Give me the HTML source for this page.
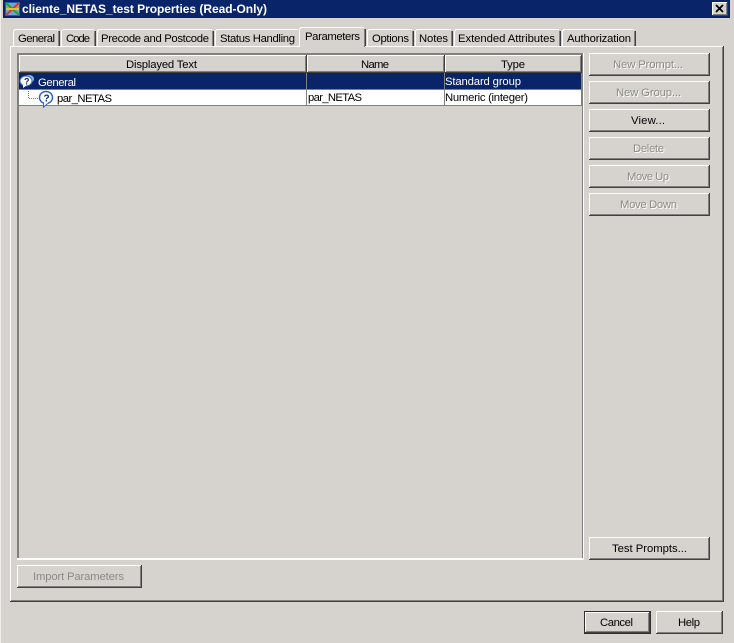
<!DOCTYPE html>
<html>
<head>
<meta charset="utf-8">
<style>
html,body{margin:0;padding:0;width:734px;height:643px;overflow:hidden;background:#d6d3ce}
svg{display:block;position:absolute;left:0;top:0}
text{font-family:"Liberation Sans",sans-serif;font-size:11.3px;fill:#000}
.dis{fill:#8c8a85}
.sh{fill:#fff}
.w{fill:#fff}
</style>
</head>
<body>
<svg width="734" height="643" viewBox="0 0 734 643" xmlns="http://www.w3.org/2000/svg">
<rect width="734" height="643" fill="#d6d3ce"/>
<rect x="0" y="0" width="1" height="643" fill="#efeeeb"/>
<!-- Title bar -->
<rect x="3" y="0" width="727" height="18" fill="#0a246a"/>
<g shape-rendering="crispEdges">
<rect x="5" y="2" width="15" height="14" fill="#1f5fb0"/>
<rect x="6" y="3" width="13" height="12" fill="#6fa3d8"/>
</g>
<path d="M6 3 L19 15" stroke="#2ca02c" stroke-width="2"/>
<path d="M19 3 L6 15" stroke="#d83a2a" stroke-width="2"/>
<path d="M6 9 H19" stroke="#e8c020" stroke-width="2"/>
<text x="22" y="13" class="w" style="font-weight:bold;font-size:12px" textLength="245" lengthAdjust="spacing">cliente_NETAS_test Properties (Read-Only)</text>
<!-- close -->
<g shape-rendering="crispEdges">
<rect x="712" y="2" width="16" height="14" fill="#404040"/>
<rect x="712" y="2" width="15" height="13" fill="#fff"/>
<rect x="713" y="3" width="14" height="12" fill="#808080"/>
<rect x="713" y="3" width="13" height="11" fill="#d6d3ce"/>
</g>
<path d="M716 5 L723 12 M723 5 L716 12" stroke="#000" stroke-width="1.8"/>

<!-- Tab panel -->
<g shape-rendering="crispEdges">
<rect x="10" y="46" width="714" height="556" fill="#404040"/>
<rect x="10" y="46" width="713" height="555" fill="#fff"/>
<rect x="11" y="47" width="712" height="554" fill="#808080"/>
<rect x="11" y="47" width="711" height="553" fill="#d6d3ce"/>
</g>

<!-- Tabs -->
<g shape-rendering="crispEdges" fill="none">
<path d="M13.5 46 V31 L15 29.5 H58" stroke="#fff"/><path d="M59.5 31 V46" stroke="#404040"/><path d="M58.5 31 V46" stroke="#808080"/>
<path d="M61.5 46 V31 L63 29.5 H94" stroke="#fff"/><path d="M95.5 31 V46" stroke="#404040"/><path d="M94.5 31 V46" stroke="#808080"/>
<path d="M97.5 46 V31 L99 29.5 H212" stroke="#fff"/><path d="M213.5 31 V46" stroke="#404040"/><path d="M212.5 31 V46" stroke="#808080"/>
<path d="M215.5 46 V31 L217 29.5 H298" stroke="#fff"/>
<path d="M367.5 46 V31 L369 29.5 H412" stroke="#fff"/><path d="M413.5 31 V46" stroke="#404040"/><path d="M412.5 31 V46" stroke="#808080"/>
<path d="M415.5 46 V31 L417 29.5 H451" stroke="#fff"/><path d="M452.5 31 V46" stroke="#404040"/><path d="M451.5 31 V46" stroke="#808080"/>
<path d="M454.5 46 V31 L456 29.5 H559" stroke="#fff"/><path d="M560.5 31 V46" stroke="#404040"/><path d="M559.5 31 V46" stroke="#808080"/>
<path d="M562.5 46 V31 L564 29.5 H634" stroke="#fff"/><path d="M635.5 31 V46" stroke="#404040"/><path d="M634.5 31 V46" stroke="#808080"/>
</g>
<g shape-rendering="crispEdges">
<rect x="300" y="28" width="65" height="20" fill="#d6d3ce"/>
<path d="M299.5 47 V29 L301 27.5 H364" stroke="#fff" fill="none"/>
<path d="M365.5 29 V46" stroke="#404040"/><path d="M364.5 29 V47" stroke="#808080"/>
</g>
<text x="18" y="42" textLength="37">General</text>
<text x="66" y="42" textLength="24">Code</text>
<text x="101" y="42" textLength="108">Precode and Postcode</text>
<text x="220" y="42" textLength="75">Status Handling</text>
<text x="305" y="40" textLength="55">Parameters</text>
<text x="372" y="42" textLength="37">Options</text>
<text x="419" y="42" textLength="29">Notes</text>
<text x="458" y="42" textLength="97">Extended Attributes</text>
<text x="567" y="42" textLength="64">Authorization</text>

<!-- List -->
<g shape-rendering="crispEdges">
<rect x="17" y="53" width="567" height="507" fill="#fff"/>
<rect x="17" y="53" width="566" height="505" fill="#808080"/>
<rect x="19" y="55" width="563" height="503" fill="#d6d3ce"/>
<!-- header -->
<rect x="19" y="55" width="288" height="18" fill="#404040"/>
<rect x="19" y="55" width="287" height="17" fill="#fff"/>
<rect x="20" y="56" width="286" height="16" fill="#808080"/>
<rect x="20" y="56" width="285" height="15" fill="#d6d3ce"/>
<rect x="307" y="55" width="138" height="18" fill="#404040"/>
<rect x="307" y="55" width="137" height="17" fill="#fff"/>
<rect x="308" y="56" width="136" height="16" fill="#808080"/>
<rect x="308" y="56" width="135" height="15" fill="#d6d3ce"/>
<rect x="445" y="55" width="137" height="18" fill="#404040"/>
<rect x="445" y="55" width="136" height="17" fill="#fff"/>
<rect x="446" y="56" width="135" height="16" fill="#808080"/>
<rect x="446" y="56" width="134" height="15" fill="#d6d3ce"/>
<!-- rows -->
<rect x="19" y="73" width="563" height="16" fill="#0a246a"/>
<rect x="19" y="89" width="563" height="1" fill="#808080"/>
<rect x="19" y="90" width="563" height="15" fill="#fff"/>
<rect x="19" y="105" width="563" height="1" fill="#808080"/>
<rect x="306" y="73" width="1" height="33" fill="#808080"/>
<rect x="444" y="73" width="1" height="33" fill="#808080"/>
<rect x="581" y="73" width="1" height="33" fill="#808080"/>
</g>
<text x="126" y="68" textLength="71">Displayed Text</text>
<text x="361" y="68" textLength="28">Name</text>
<text x="501" y="68" textLength="24">Type</text>

<!-- group icon -->
<ellipse cx="29" cy="79" rx="5" ry="4" fill="#8fb4e8"/>
<ellipse cx="26" cy="81" rx="6" ry="5" fill="#fff" stroke="#3a6cc0"/>
<path d="M23 85 L23 88 L27 85Z" fill="#fff"/>
<text x="24" y="84.500" style="font-size:9px;font-weight:bold;fill:#0a246a">?</text>
<text x="38" y="86" class="w" textLength="38">General</text>
<text x="445" y="85" class="w" textLength="76">Standard group</text>

<!-- tree dots -->
<path d="M28.5 91 V98.5 H39" stroke="#808080" stroke-dasharray="1 1" fill="none" shape-rendering="crispEdges"/>
<!-- param icon -->
<ellipse cx="46" cy="97.500" rx="6.500" ry="6" fill="#fff" stroke="#2a62c8" stroke-width="1.500"/>
<path d="M43.500 103 L43.500 107 L48 103.200Z" fill="#fff" stroke="#2a62c8" stroke-width="1"/>
<path d="M44 103 H47.500" stroke="#fff" stroke-width="1.200"/>
<text x="43.500" y="101.500" style="font-size:10px;font-weight:bold;fill:#0a246a">?</text>
<text x="57" y="102" textLength="55">par_NETAS</text>
<text x="308" y="101" textLength="54">par_NETAS</text>
<text x="445" y="101" textLength="83">Numeric (integer)</text>

<!-- Buttons -->
<defs>
<g id="btn" shape-rendering="crispEdges">
<rect x="0" y="0" width="121" height="23" fill="#404040"/>
<rect x="0" y="0" width="120" height="22" fill="#fff"/>
<rect x="1" y="1" width="119" height="21" fill="#808080"/>
<rect x="1" y="1" width="118" height="20" fill="#d6d3ce"/>
</g>
</defs>
<use href="#btn" x="589" y="53"/>
<use href="#btn" x="589" y="81"/>
<use href="#btn" x="589" y="109"/>
<use href="#btn" x="589" y="137"/>
<use href="#btn" x="589" y="165"/>
<use href="#btn" x="589" y="193"/>
<use href="#btn" x="589" y="537"/>

<text x="614" y="69" class="sh" textLength="70">New Prompt...</text>
<text x="617" y="97" class="sh" textLength="65">New Group...</text>
<text x="634" y="153" class="sh" textLength="31">Delete</text>
<text x="628" y="181" class="sh" textLength="42">Move Up</text>
<text x="621" y="209" class="sh" textLength="57">Move Down</text>
<text x="34" y="581" class="sh" textLength="91">Import Parameters</text>
<text x="613" y="68" class="dis" textLength="70">New Prompt...</text>
<text x="616" y="96" class="dis" textLength="65">New Group...</text>
<text x="633" y="152" class="dis" textLength="31">Delete</text>
<text x="627" y="180" class="dis" textLength="42">Move Up</text>
<text x="620" y="208" class="dis" textLength="57">Move Down</text>
<text x="631" y="124" textLength="34">View...</text>
<text x="612" y="552" textLength="75">Test Prompts...</text>

<g shape-rendering="crispEdges">
<rect x="17" y="565" width="125" height="23" fill="#404040"/>
<rect x="17" y="565" width="124" height="22" fill="#fff"/>
<rect x="18" y="566" width="123" height="21" fill="#808080"/>
<rect x="18" y="566" width="122" height="20" fill="#d6d3ce"/>
<!-- Cancel (default) -->
<rect x="584" y="611" width="67" height="23" fill="#303030"/>
<rect x="585" y="612" width="65" height="21" fill="#404040"/>
<rect x="585" y="612" width="64" height="20" fill="#fff"/>
<rect x="586" y="613" width="63" height="19" fill="#808080"/>
<rect x="586" y="613" width="62" height="18" fill="#d6d3ce"/>
<!-- Help -->
<rect x="656" y="611" width="67" height="23" fill="#404040"/>
<rect x="656" y="611" width="66" height="22" fill="#fff"/>
<rect x="657" y="612" width="65" height="21" fill="#808080"/>
<rect x="657" y="612" width="64" height="20" fill="#d6d3ce"/>
</g>
<text x="33" y="580" class="dis" textLength="91">Import Parameters</text>
<text x="600" y="626" textLength="33">Cancel</text>
<text x="678" y="626" textLength="22">Help</text>
</svg>
</body>
</html>
